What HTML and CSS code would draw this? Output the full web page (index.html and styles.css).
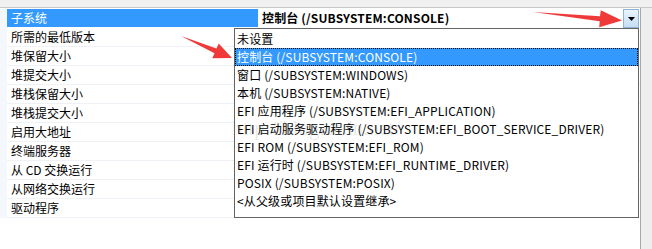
FILE: index.html
```html
<!DOCTYPE html>
<html lang="zh-CN">

<head>
    <meta charset="UTF-8">
    <title>子系统</title>
    <link rel="stylesheet" href="styles.css">
</head>

<body>
    <div class="window">
        <div class="topbar"></div>
        <div class="main">
            <div class="grid">
                <div class="row selected">
                    <div class="gutter"></div>
                    <div class="name">子系统</div>
                    <div class="value">
                        <span class="current">控制台 (/SUBSYSTEM:CONSOLE)</span>
                        <span class="drop-btn">
                            <svg width="7" height="4" viewBox="0 0 7 4"><path d="M0 0 H7 L3.5 4 Z" fill="#000"/></svg>
                        </span>
                    </div>
                </div>
                <div class="row"><div class="gutter"></div><div class="name">所需的最低版本</div><div class="value"></div></div>
                <div class="row"><div class="gutter"></div><div class="name">堆保留大小</div><div class="value"></div></div>
                <div class="row"><div class="gutter"></div><div class="name">堆提交大小</div><div class="value"></div></div>
                <div class="row"><div class="gutter"></div><div class="name">堆栈保留大小</div><div class="value"></div></div>
                <div class="row"><div class="gutter"></div><div class="name">堆栈提交大小</div><div class="value"></div></div>
                <div class="row"><div class="gutter"></div><div class="name">启用大地址</div><div class="value"></div></div>
                <div class="row"><div class="gutter"></div><div class="name">终端服务器</div><div class="value"></div></div>
                <div class="row"><div class="gutter"></div><div class="name">从 CD 交换运行</div><div class="value"></div></div>
                <div class="row"><div class="gutter"></div><div class="name">从网络交换运行</div><div class="value"></div></div>
                <div class="row"><div class="gutter"></div><div class="name">驱动程序</div><div class="value"></div></div>
            </div>
            <div class="side"></div>
        </div>

        <!-- open combo list -->
        <ul class="droplist">
            <li>未设置</li>
            <li class="active">控制台 (/SUBSYSTEM:CONSOLE)</li>
            <li>窗口 (/SUBSYSTEM:WINDOWS)</li>
            <li>本机 (/SUBSYSTEM:NATIVE)</li>
            <li>EFI 应用程序 (/SUBSYSTEM:EFI_APPLICATION)</li>
            <li>EFI 启动服务驱动程序 (/SUBSYSTEM:EFI_BOOT_SERVICE_DRIVER)</li>
            <li>EFI ROM (/SUBSYSTEM:EFI_ROM)</li>
            <li>EFI 运行时 (/SUBSYSTEM:EFI_RUNTIME_DRIVER)</li>
            <li>POSIX (/SUBSYSTEM:POSIX)</li>
            <li>&lt;从父级或项目默认设置继承&gt;</li>
        </ul>

        <div class="watermark">http://blog.csdn.net/</div>

        <svg class="arrows" width="652" height="249" viewBox="0 0 652 249">
            <polygon points="181,36 216.5,48.6 218.7,43.5 232,58 212.3,58.3 214.5,53.2" fill="#f03a3a"/>
            <polygon points="533,12 600,16.3 600.8,10.3 622,20.5 599.2,27.3 599.7,21.3" fill="#f03a3a"/>
        </svg>
    </div>
</body>

</html>
```

FILE: styles.css
```css
body {
    margin: 0;
    padding: 0;
    background-color: #fff;
    font-family: "Noto Sans CJK SC", sans-serif;
    font-size: 12px;
    color: #000;
}

.window {
    position: relative;
    width: 652px;
    height: 249px;
    overflow: hidden;
    background-color: #fff;
}

.topbar {
    height: 7px;
    background-color: #f0f0f0;
    border-bottom: 1px solid #c9c9c9;
}

.main {
    display: flex;
    height: 241px;
}

.grid {
    width: 640px;
    padding-top: 1px;
}

.side {
    flex: 1;
    background-color: #eeeeee;
    border-left: 1px solid #a8a8a8;
}

.row {
    display: flex;
    height: 19px;
}

.gutter {
    width: 7px;
    background-color: #f4f7fb;
}

.name {
    width: 247px;
    padding-left: 4px;
    line-height: 18px;
    border-bottom: 1px solid #eef1f5;
    white-space: nowrap;
}

.value {
    flex: 1;
    display: flex;
    justify-content: space-between;
    padding-left: 4px;
    line-height: 18px;
    border-bottom: 1px solid #eef1f5;
    letter-spacing: 0.15px;
}

.row.selected .name {
    background-color: #3399ff;
    color: #fff;
    border-bottom-color: #fff;
}

.row.selected .value {
    border-bottom-color: #fff;
}

.current {
    font-weight: bold;
}

.drop-btn {
    display: flex;
    align-items: center;
    justify-content: center;
    width: 14px;
    height: 17px;
    margin-right: 1px;
    border: 1px solid #8fb4d8;
    background: linear-gradient(#eaf3fc, #c6def5);
}

.droplist {
    position: absolute;
    left: 234px;
    top: 28px;
    width: 403px;
    height: 187px;
    margin: 0;
    padding: 1px 0 0;
    list-style: none;
    background-color: #fff;
    border: 1px solid #646464;
    letter-spacing: 0.15px;
}

.droplist li {
    height: 18px;
    line-height: 17px;
    padding-left: 2px;
    white-space: nowrap;
}

.droplist li.active {
    background-color: #3399ff;
    color: #fff;
    outline: 1px dotted #000;
    outline-offset: -1px;
}

.watermark {
    position: absolute;
    left: 232px;
    top: 116px;
    font-family: "Liberation Serif", serif;
    font-size: 21px;
    color: rgba(120, 120, 120, 0.16);
    pointer-events: none;
}

.arrows {
    position: absolute;
    left: 0;
    top: 0;
    pointer-events: none;
}
```
